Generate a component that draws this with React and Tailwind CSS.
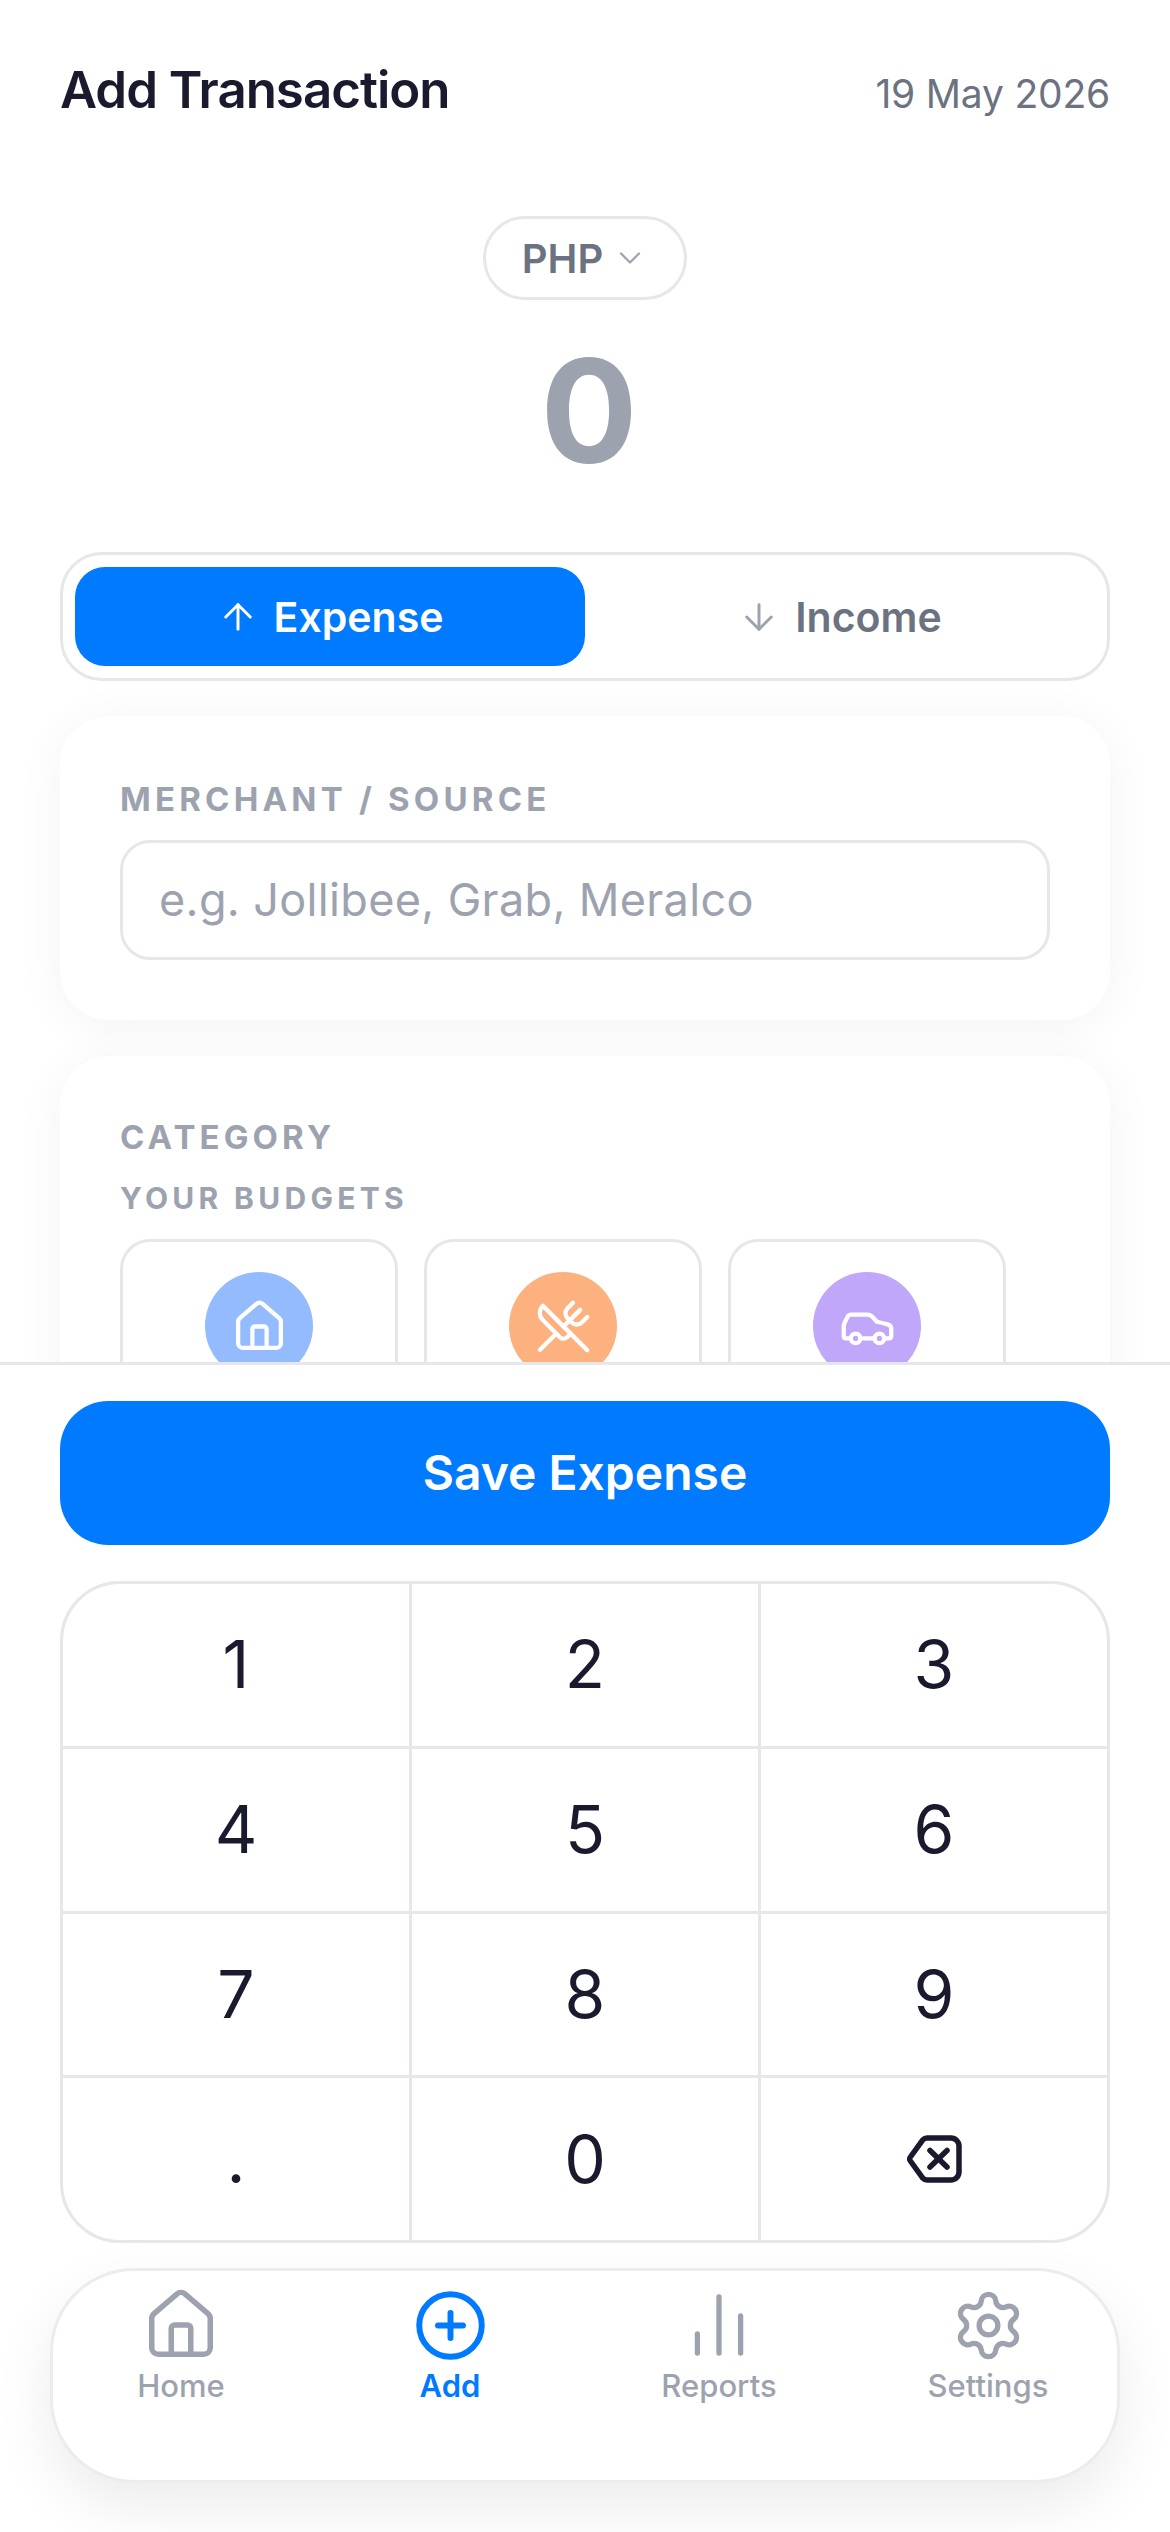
import React from "react";
import { ArrowUp, ArrowDown, ChevronDown, House, UtensilsCrossed, Car, CirclePlus, Settings } from "lucide-react";

const FONT = "font-['Inter',sans-serif]";
const keys = ["1", "2", "3", "4", "5", "6", "7", "8", "9", ".", "0", "del"];

function Backspace() {
  return (
    <svg width="56" height="48" viewBox="0 0 56 48" fill="none" stroke="#1a1a2e" strokeWidth="5.5" strokeLinecap="round" strokeLinejoin="round">
      <path d="M21 3H45a8 8 0 0 1 8 8V37a8 8 0 0 1-8 8H21a6 6 0 0 1-4.2-1.8L4.4 26a3 3 0 0 1 0-4L16.8 4.8A6 6 0 0 1 21 3Z" />
      <path d="M24 15.5 41 32" />
      <path d="M41 15.5 24 32" />
    </svg>
  );
}

function Bars() {
  return (
    <svg width="78" height="78" viewBox="0 0 78 78" fill="none" stroke="#9ca3af" strokeWidth="5.3" strokeLinecap="round">
      <path d="M17.4 67V48" />
      <path d="M39 67V11" />
      <path d="M60.6 67V30" />
    </svg>
  );
}

function Tile({ color, children }) {
  return (
    <div className="w-[278px] h-[240px] shrink-0 rounded-[30px] border-[3px] border-[#e5e7eb] bg-white flex justify-center pt-[30px]">
      <div className={`w-[108px] h-[108px] rounded-full flex items-center justify-center ${color}`}>{children}</div>
    </div>
  );
}

function NavItem({ icon, label, active }) {
  return (
    <div className="w-[200px] flex flex-col items-center">
      <div className="h-[78px] flex items-center justify-center">{icon}</div>
      <span className={`text-[31px] leading-[36px] mt-[4px] font-medium ${active ? "text-[#007aff] font-semibold" : "text-[#9ca3af]"}`}>{label}</span>
    </div>
  );
}

export default function App() {
  return (
    <div className={`${FONT} w-[1170px] h-[2532px] bg-white flex flex-col overflow-hidden`}>
      <div className="h-[1362px] shrink-0 overflow-hidden bg-white px-[60px]">
        <div className="flex items-baseline justify-between pt-[60px] h-[120px]">
          <h1 className="text-[51px] leading-[60px] font-semibold text-[#1a1a2e] tracking-[-1px]">Add Transaction</h1>
          <span className="text-[39px] leading-[48px] text-[#6b7280] tracking-[-0.2px]">19 May 2026</span>
        </div>
        <div className="flex flex-col items-center pt-[96px]">
          <div className="w-[204px] h-[84px] rounded-full border-[3px] border-[#e5e7eb] flex items-center justify-center gap-[9px]">
            <span className="pt-[2px] text-[40px] font-semibold text-[#6b7280]">PHP</span>
            <ChevronDown size={36} color="#9ca3af" strokeWidth={1.5} />
          </div>
          <div className="mt-[27px] pl-[8px] text-[144px] leading-[168px] font-bold text-[#9ca3af]">0</div>
        </div>
        <div className="mt-[57px] h-[129px] rounded-[42px] border-[3px] border-[#e5e7eb] p-[12px] flex">
          <div className="flex-1 rounded-[30px] bg-[#007aff] flex items-center justify-center gap-[15px] text-white">
            <ArrowUp size={42} strokeWidth={1.7} />
            <span className="pt-[3px] text-[41px] font-semibold">Expense</span>
          </div>
          <div className="flex-1 rounded-[30px] flex items-center justify-center gap-[15px] text-[#6b7280]">
            <ArrowDown size={42} strokeWidth={1.7} color="#9ca3af" />
            <span className="pt-[3px] text-[41px] font-semibold">Income</span>
          </div>
        </div>
        <div className="mt-[35px] rounded-[48px] bg-white shadow-[0_6px_48px_rgba(0,0,0,0.05)] p-[60px]">
          <div className="text-[33px] leading-[46px] font-bold tracking-[4.2px] text-[#9ca3af]">MERCHANT / SOURCE</div>
          <div className="mt-[18px] h-[120px] rounded-[30px] border-[3px] border-[#e5e7eb] flex items-center px-[36px]">
            <span className="text-[45px] tracking-[0.35px] text-[#9ca3af]">e.g. Jollibee, Grab, Meralco</span>
          </div>
        </div>
        <div className="mt-[36px] rounded-[48px] bg-white shadow-[0_6px_48px_rgba(0,0,0,0.05)] p-[60px]">
          <div className="text-[33px] leading-[42px] font-bold tracking-[4.1px] text-[#9ca3af]">CATEGORY</div>
          <div className="mt-[22px] text-[30px] leading-[36px] font-bold tracking-[4.3px] text-[#9ca3af]">YOUR BUDGETS</div>
          <div className="mt-[23px] flex gap-[26px]">
            <Tile color="bg-[#93bbfd]"><House size={57} color="#fff" strokeWidth={1.8} /></Tile>
            <Tile color="bg-[#fdb17f]"><UtensilsCrossed size={57} color="#fff" strokeWidth={1.8} /></Tile>
            <Tile color="bg-[#c0a7f9]"><Car size={57} color="#fff" strokeWidth={1.8} /></Tile>
          </div>
        </div>
      </div>
      <div className="relative flex-1 border-t-[3px] border-[#e5e7eb] bg-white px-[60px] pt-[36px]">
        <button className="w-full h-[144px] rounded-[48px] bg-[#007aff] text-white text-[48px] font-semibold">Save Expense</button>
        <div className="mt-[36px] rounded-[60px] border-[3px] border-[#e5e7eb] bg-[#e5e7eb] overflow-hidden grid grid-cols-3 gap-[3px] h-[662px]">
          {keys.map((k) => (
            <div key={k} className="bg-white flex items-center justify-center text-[66px] text-[#1a1a2e]">
              {k === "del" ? <Backspace /> : k}
            </div>
          ))}
        </div>
        <div className="-mx-[10px] mt-[25px] h-[215px] rounded-[84px] border-[3px] border-[#ececee] bg-white shadow-[0_24px_60px_rgba(0,0,0,0.08)] flex justify-between pl-[28px] pr-[29px] pt-[15px]">
          <NavItem icon={<House size={78} color="#9ca3af" strokeWidth={1.7} />} label="Home" />
          <NavItem icon={<CirclePlus size={75} color="#007aff" strokeWidth={1.9} />} label="Add" active />
          <NavItem icon={<Bars />} label="Reports" />
          <NavItem icon={<Settings size={75} color="#9ca3af" strokeWidth={1.7} />} label="Settings" />
        </div>
      </div>
    </div>
  );
}
